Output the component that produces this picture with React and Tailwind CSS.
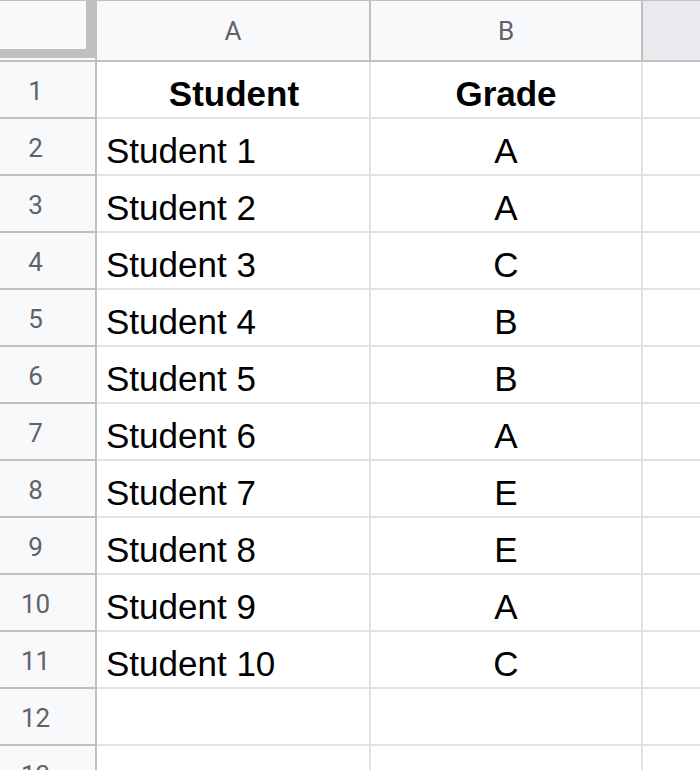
import React from 'react'

const rows = [
  ['Student', 'Grade', true],
  ['Student 1', 'A'],
  ['Student 2', 'A'],
  ['Student 3', 'C'],
  ['Student 4', 'B'],
  ['Student 5', 'B'],
  ['Student 6', 'A'],
  ['Student 7', 'E'],
  ['Student 8', 'E'],
  ['Student 9', 'A'],
  ['Student 10', 'C'],
  ['', ''],
  ['', ''],
]

const headFont = { fontFamily: 'Roboto, "Noto Sans", sans-serif' }
const cellFont = { fontFamily: '"Liberation Sans", Arial, sans-serif' }

// ─── Column header row ────────────────────────────────────────────────────────
const HeaderRow = () => (
  <div className="flex h-[62px] shrink-0" style={headFont}>
    {/* Corner with freeze handle */}
    <div className="w-[97px] h-full border-r-2 border-b-2 border-[#c0c0c0] bg-[#f8f9fa] box-border">
      <div className="w-[95px] h-[58px] border-t border-r-[9px] border-b-[9px] border-[#c0c0c0] bg-[#f8f9fa] box-border" />
    </div>
    <div className="w-[274px] h-full border-t border-r-2 border-b-2 border-[#c0c0c0] bg-[#f8f9fa] box-border flex items-center justify-center pt-[2px] text-[26px] text-[#5f6368]">
      A
    </div>
    <div className="w-[272px] h-full border-t border-r-2 border-b-2 border-[#c0c0c0] bg-[#f8f9fa] box-border flex items-center justify-center pt-[2px] text-[26px] text-[#5f6368]">
      B
    </div>
    <div className="flex-1 h-full border-t border-b-2 border-[#c0c0c0] bg-[#e8eaed] box-border" />
  </div>
)

// ─── Data row ─────────────────────────────────────────────────────────────────
const Row = ({ n, name, grade, bold }) => (
  <div className="flex h-[57px] shrink-0">
    <div
      className="w-[97px] h-full border-r-2 border-b-2 border-[#c0c0c0] bg-[#f8f9fa] box-border flex items-center justify-center pt-[3px] pr-[24px] text-[26px] text-[#5f6368]"
      style={headFont}
    >
      {n}
    </div>
    <div
      className={`w-[274px] h-full border-r-2 border-b-2 border-[#e2e2e2] box-border flex items-end pb-[4px] leading-[1.1] text-[35px] text-black ${
        bold ? 'justify-center font-bold pl-[2px]' : 'pl-[9px]'
      }`}
      style={cellFont}
    >
      {name}
    </div>
    <div
      className={`w-[272px] h-full border-r-2 border-b-2 border-[#e2e2e2] box-border flex items-end justify-center pb-[4px] leading-[1.1] text-[35px] text-black ${
        bold ? 'font-bold' : ''
      }`}
      style={cellFont}
    >
      {grade}
    </div>
    <div className="flex-1 h-full border-b-2 border-[#e2e2e2] box-border" />
  </div>
)

export default function App() {
  return (
    <div className="w-[700px] h-[770px] overflow-hidden bg-white flex flex-col">
      <HeaderRow />
      {rows.map(([name, grade, bold], i) => (
        <Row key={i} n={i + 1} name={name} grade={grade} bold={bold} />
      ))}
    </div>
  )
}
